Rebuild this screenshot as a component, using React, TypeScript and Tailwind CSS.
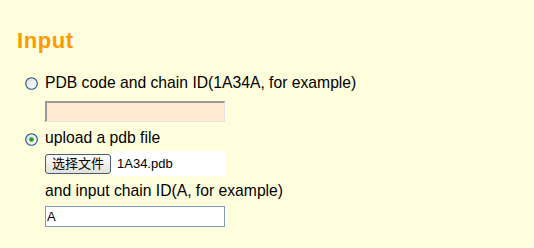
function Radio({ checked }: { checked?: boolean }) {
  return (
    <svg width="13" height="13" viewBox="0 0 13 13" className="shrink-0">
      <defs>
        <linearGradient id={checked ? "rg-on" : "rg-off"} x1="0" y1="0" x2="1" y2="1">
          <stop offset="0" stopColor="#dcdcd6" />
          <stop offset="1" stopColor="#ffffff" />
        </linearGradient>
      </defs>
      <circle cx="6.5" cy="6.5" r="5.8" fill={`url(#${checked ? "rg-on" : "rg-off"})`} stroke="#1c5180" strokeWidth="1.1" />
      {checked && <circle cx="6.5" cy="6.5" r="2.3" fill="#21a121" />}
    </svg>
  );
}

export default function App() {
  return (
    <div className="min-h-screen bg-[#ffffdd] font-['Liberation_Sans',Arial,'Noto_Sans_CJK_SC',sans-serif] text-black">
      <div className="pt-[30px]">
        <h2 className="ml-[17px] h-[22px] text-[22px] leading-[22px] font-bold tracking-[0.6px] text-[#ff9900]">
          Input
        </h2>

        <div className="ml-[25px] mt-[21px] flex flex-col">
          <label className="flex h-[20px] items-center gap-[7px] text-[15.7px] leading-[20px]">
            <Radio />
            <span>PDB code and chain ID(1A34A, for example)</span>
          </label>
          <input
            type="text"
            className="ml-[20px] mt-[8px] h-[21px] w-[180px] border-t-2 border-l-2 border-r border-b border-t-[#999999] border-l-[#999999] border-r-[#e4e4e4] border-b-[#e4e4e4] bg-[#ffe9cf] outline-none"
          />

          <label className="mt-[6px] flex h-[20px] items-center gap-[7px] text-[15.7px] leading-[20px]">
            <span className="translate-y-[1px]">
              <Radio checked />
            </span>
            <span>upload a pdb file</span>
          </label>

          <div className="ml-[20px] mt-[3px] flex h-[25px] w-[180px] items-center">
            <button className="h-[20px] w-[66px] shrink-0 rounded-[3px] border border-[#4a5a70] bg-gradient-to-b from-white to-[#e2e1d8] text-[13px] leading-[18px]">
              选择文件
            </button>
            <span className="flex h-full flex-1 items-center bg-white pl-[6px] text-[13px]">1A34.pdb</span>
          </div>

          <div className="ml-[20px] mt-[5px] h-[20px] text-[15.7px] leading-[20px]">
            and input chain ID(A, for example)
          </div>
          <input
            type="text"
            defaultValue="A"
            className="ml-[20px] mt-[5px] h-[21px] w-[180px] border border-[#7f9db9] bg-white px-[1px] text-[13px] outline-none"
          />
        </div>
      </div>
    </div>
  );
}
